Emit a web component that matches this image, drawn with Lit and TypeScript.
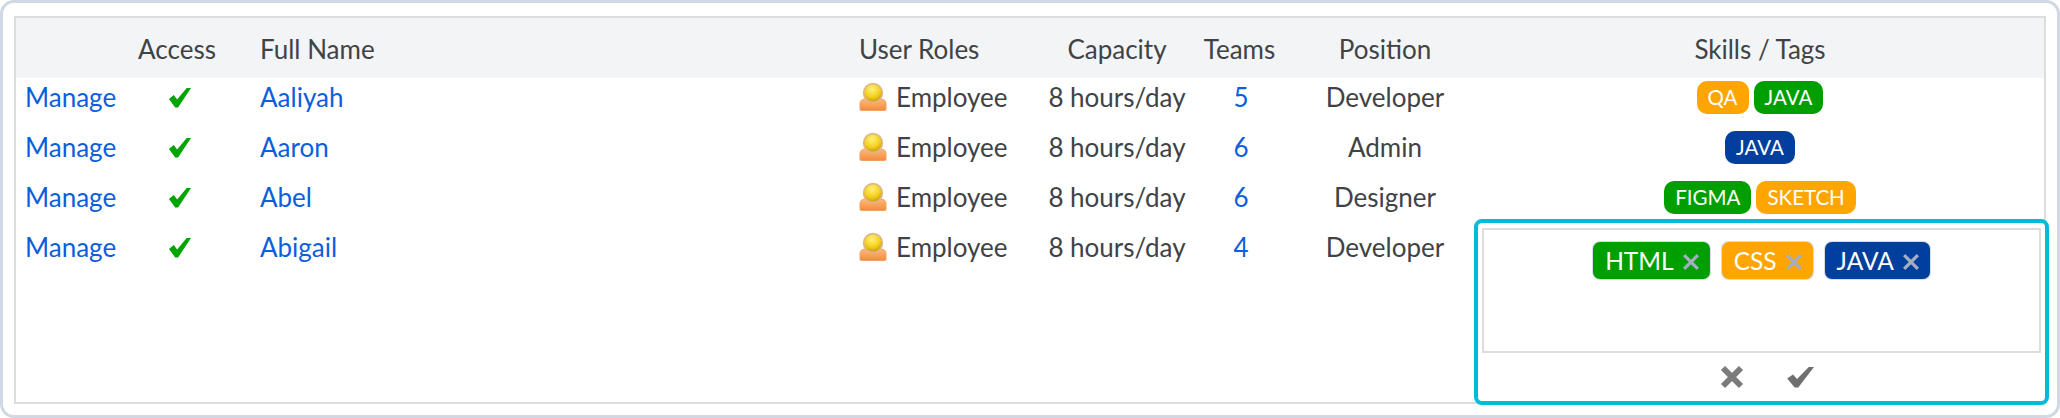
import { LitElement, html, css, svg } from "lit";
import { customElement } from "lit/decorators.js";

type Tag = [string, string];
const rows: { name: string; teams: number; position: string; tags: Tag[] }[] = [
  { name: "Aaliyah", teams: 5, position: "Developer", tags: [["QA", "orange"], ["JAVA", "green"]] },
  { name: "Aaron", teams: 6, position: "Admin", tags: [["JAVA", "navy"]] },
  { name: "Abel", teams: 6, position: "Designer", tags: [["FIGMA", "green"], ["SKETCH", "orange"]] },
  { name: "Abigail", teams: 4, position: "Developer", tags: [] },
];

const check = (cls: string) => html`<svg class=${cls} viewBox="0 0 24 24" preserveAspectRatio="none">
  <path d="M1 13.5 L6 9.5 L9.5 14 L19.5 2 L24 2 L10.5 22.5 L7.5 22.5 Z"></path>
</svg>`;

const person = svg`<defs>
    <radialGradient id="head" cx="0.45" cy="0.3" r="0.7">
      <stop offset="0" stop-color="#fff27a"></stop>
      <stop offset="0.6" stop-color="#f4cf1c"></stop>
      <stop offset="1" stop-color="#c9960c"></stop>
    </radialGradient>
    <linearGradient id="body" x1="0" y1="0" x2="0" y2="1">
      <stop offset="0" stop-color="#fdba7c"></stop>
      <stop offset="1" stop-color="#f58a3c"></stop>
    </linearGradient>
  </defs>
  <path d="M1 27.5 L1 21.5 Q1 17.5 6 17 L22 17 Q27 17.5 27 21.5 L27 27.5 Q27 28.5 25.5 28.5 L2.5 28.5 Q1 28.5 1 27.5 Z" fill="url(#body)" stroke="#f0a060" stroke-width="1"></path>
  <circle cx="14" cy="11" r="9.4" fill="url(#head)" stroke="#dcb98a" stroke-width="1.6"></circle>`;

@customElement("app-root")
export class AppRoot extends LitElement {
  static styles = css`
    :host {
      display: block;
      width: 2060px;
      height: 418px;
      box-sizing: border-box;
      font-family: Lato, "Liberation Sans", sans-serif;
      font-size: 26px;
      color: #3f4346;
      background: #fff;
    }
    .frame {
      box-sizing: border-box;
      height: 418px;
      border: 3px solid #cfd8e3;
      border-radius: 14px;
      padding: 13px 11px 11px 11px;
      background: #fff;
    }
    .grid {
      position: relative;
      box-sizing: border-box;
      height: 100%;
      border: 2px solid #dcdddd;
      display: grid;
      grid-template-columns: 102px 118px 614px 201px 132px 113px 178px 1fr;
      grid-auto-rows: 50px;
      align-content: start;
    }
    .head {
      background: #f3f4f6;
      height: 60px;
      display: flex;
      align-items: center;
      justify-content: center;
      white-space: nowrap;
      padding-top: 1px;
      box-sizing: border-box;
    }
    .cell {
      display: flex;
      align-items: center;
      justify-content: center;
      white-space: nowrap;
      padding-top: 8px;
      box-sizing: border-box;
    }
    .row {
      display: contents;
    }
    .left {
      justify-content: flex-start;
    }
    .pad-manage {
      padding-left: 9px;
    }
    .pad-name {
      padding-left: 24px;
    }
    .pad-role {
      padding-left: 9px;
    }
    .shift {
      padding-left: 4px;
    }
    .head-skills {
      padding-left: 2px;
    }
    .digit {
      padding-left: 3px;
    }
    a {
      color: #0b5fdc;
      text-decoration: none;
    }
    .ok {
      width: 23px;
      height: 23px;
      fill: #00a500;
    }
    .role {
      display: flex;
      align-items: center;
      gap: 9px;
    }
    .person {
      width: 28px;
      height: 30px;
    }
    .tags {
      gap: 5px;
      padding-left: 2px;
    }
    .tag {
      display: inline-flex;
      align-items: center;
      height: 33px;
      padding: 0 11px;
      border-radius: 10px;
      color: #fff;
      font-size: 20.5px;
    }
    .orange {
      background: #ffa500;
    }
    .green {
      background: #009f00;
    }
    .navy {
      background: #003f9e;
    }
    .editor {
      position: absolute;
      right: -5px;
      bottom: -3px;
      width: 575px;
      height: 186px;
      box-sizing: border-box;
      border: 4px solid #00bcd9;
      border-radius: 8px;
      background: #fff;
      padding: 5px 4px 0;
      display: flex;
      flex-direction: column;
    }
    .box {
      box-sizing: border-box;
      height: 125px;
      border: 2px solid #dcdddd;
      display: flex;
      justify-content: center;
      align-items: flex-start;
      gap: 12px;
      padding-top: 12px;
    }
    .chip {
      display: inline-flex;
      align-items: center;
      gap: 9px;
      height: 37px;
      padding: 0 11px 0 12px;
      border-radius: 7px;
      color: #fff;
      font-size: 24.5px;
      box-shadow: 0 0 0 1px #d5dde8;
    }
    .x {
      width: 16px;
      height: 16px;
      stroke: #a3aec2;
      stroke-width: 2.8;
      margin-top: 3px;
    }
    .actions {
      flex: 1;
      display: flex;
      justify-content: center;
      align-items: center;
      gap: 42px;
      padding-left: 10px;
    }
    .act-x {
      width: 24px;
      height: 24px;
      stroke: #7b7b7b;
      stroke-width: 6;
    }
    .act-ok {
      width: 28px;
      height: 24px;
      fill: #6f6f6f;
    }
  `;

  render() {
    return html`<div class="frame">
      <div class="grid">
        <div class="head"></div>
        <div class="head">Access</div>
        <div class="head left pad-name">Full Name</div>
        <div class="head left pad-role">User Roles</div>
        <div class="head">Capacity</div>
        <div class="head">Teams</div>
        <div class="head">Position</div>
        <div class="head head-skills">Skills / Tags</div>
        ${rows.map(
          (r) => html`<div class="row">
            <div class="cell left pad-manage"><a href="#">Manage</a></div>
            <div class="cell shift">${check("ok")}</div>
            <div class="cell left pad-name"><a href="#">${r.name}</a></div>
            <div class="cell left pad-role">
              <span class="role"><svg class="person" viewBox="0 0 28 30">${person}</svg>Employee</span>
            </div>
            <div class="cell">8 hours/day</div>
            <div class="cell digit"><a href="#">${r.teams}</a></div>
            <div class="cell">${r.position}</div>
            <div class="cell tags">
              ${r.tags.map(([t, c]) => html`<span class="tag ${c}">${t}</span>`)}
            </div>
          </div>`
        )}
        <div class="editor">
          <div class="box">
            ${([["HTML", "green"], ["CSS", "orange"], ["JAVA", "navy"]] as Tag[]).map(
              ([t, c]) => html`<span class="chip ${c}">${t}
                <svg class="x" viewBox="0 0 14 14"><path d="M1 1 L13 13 M13 1 L1 13"></path></svg>
              </span>`
            )}
          </div>
          <div class="actions">
            <svg class="act-x" viewBox="0 0 24 24"><path d="M3 3 L21 21 M21 3 L3 21"></path></svg>
            ${check("act-ok")}
          </div>
        </div>
      </div>
    </div>`;
  }
}
